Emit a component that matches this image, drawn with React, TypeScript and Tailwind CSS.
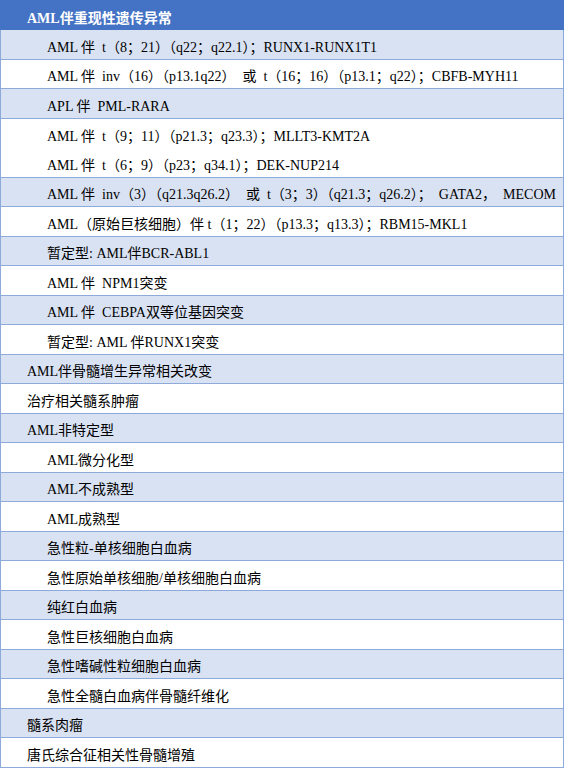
import React from "react";

type Row = { lines: string[]; indent: 1 | 2 };

const E = "\u2002";

const rows: Row[] = [
  { lines: [`AML 伴${E}t（8；21）（q22；q22.1）；RUNX1-RUNX1T1`], indent: 2 },
  { lines: [`AML 伴${E}inv（16）（p13.1q22）${E}或${E}t（16；16）（p13.1；q22）；CBFB-MYH11`], indent: 2 },
  { lines: [`APL 伴${E}PML-RARA`], indent: 2 },
  {
    lines: [
      `AML 伴${E}t（9；11）（p21.3；q23.3）；MLLT3-KMT2A`,
      `AML 伴${E}t（6；9）（p23；q34.1）；DEK-NUP214`,
    ],
    indent: 2,
  },
  { lines: [`AML 伴${E}inv（3）（q21.3q26.2）${E}或${E}t（3；3）（q21.3；q26.2）；  GATA2，  MECOM`], indent: 2 },
  { lines: ["AML（原始巨核细胞）伴 t（1；22）（p13.3；q13.3）；RBM15-MKL1"], indent: 2 },
  { lines: ["暂定型: AML伴BCR-ABL1"], indent: 2 },
  { lines: [`AML 伴${E}NPM1突变`], indent: 2 },
  { lines: [`AML 伴${E}CEBPA双等位基因突变`], indent: 2 },
  { lines: ["暂定型: AML 伴RUNX1突变"], indent: 2 },
  { lines: ["AML伴骨髓增生异常相关改变"], indent: 1 },
  { lines: ["治疗相关髓系肿瘤"], indent: 1 },
  { lines: ["AML非特定型"], indent: 1 },
  { lines: ["AML微分化型"], indent: 2 },
  { lines: ["AML不成熟型"], indent: 2 },
  { lines: ["AML成熟型"], indent: 2 },
  { lines: ["急性粒-单核细胞白血病"], indent: 2 },
  { lines: ["急性原始单核细胞/单核细胞白血病"], indent: 2 },
  { lines: ["纯红白血病"], indent: 2 },
  { lines: ["急性巨核细胞白血病"], indent: 2 },
  { lines: ["急性嗜碱性粒细胞白血病"], indent: 2 },
  { lines: ["急性全髓白血病伴骨髓纤维化"], indent: 2 },
  { lines: ["髓系肉瘤"], indent: 1 },
  { lines: ["唐氏综合征相关性骨髓增殖"], indent: 1 },
];

export default function App() {
  return (
    <div className="w-[567px] h-[773px] bg-white overflow-hidden">
      <div
        className="w-[564px] flex flex-col border-l border-r border-[#8EAADB] text-[14px] text-black"
        style={{ fontFamily: '"Liberation Serif", "Noto Sans CJK SC", serif' }}
      >
        <div className="h-[30px] -mx-px bg-[#4472C4] flex items-center pt-[7px] pl-[27px] font-bold text-white whitespace-pre">
          AML伴重现性遗传异常
        </div>
        {rows.map((r, i) => (
          <div
            key={i}
            className={`flex flex-col border-b border-[#8EAADB] ${i % 2 === 0 ? "bg-[#D9E2F3]" : "bg-white"}`}
          >
            {r.lines.map((l, j) => (
              <div
                key={j}
                className={`${r.lines.length > 1 ? "h-[29px]" : "h-[28.5px]"} flex items-center pt-[6px] whitespace-pre ${
                  r.indent === 2 ? "pl-[46px]" : "pl-[26px]"
                }`}
              >
                {l}
              </div>
            ))}
          </div>
        ))}
      </div>
    </div>
  );
}
